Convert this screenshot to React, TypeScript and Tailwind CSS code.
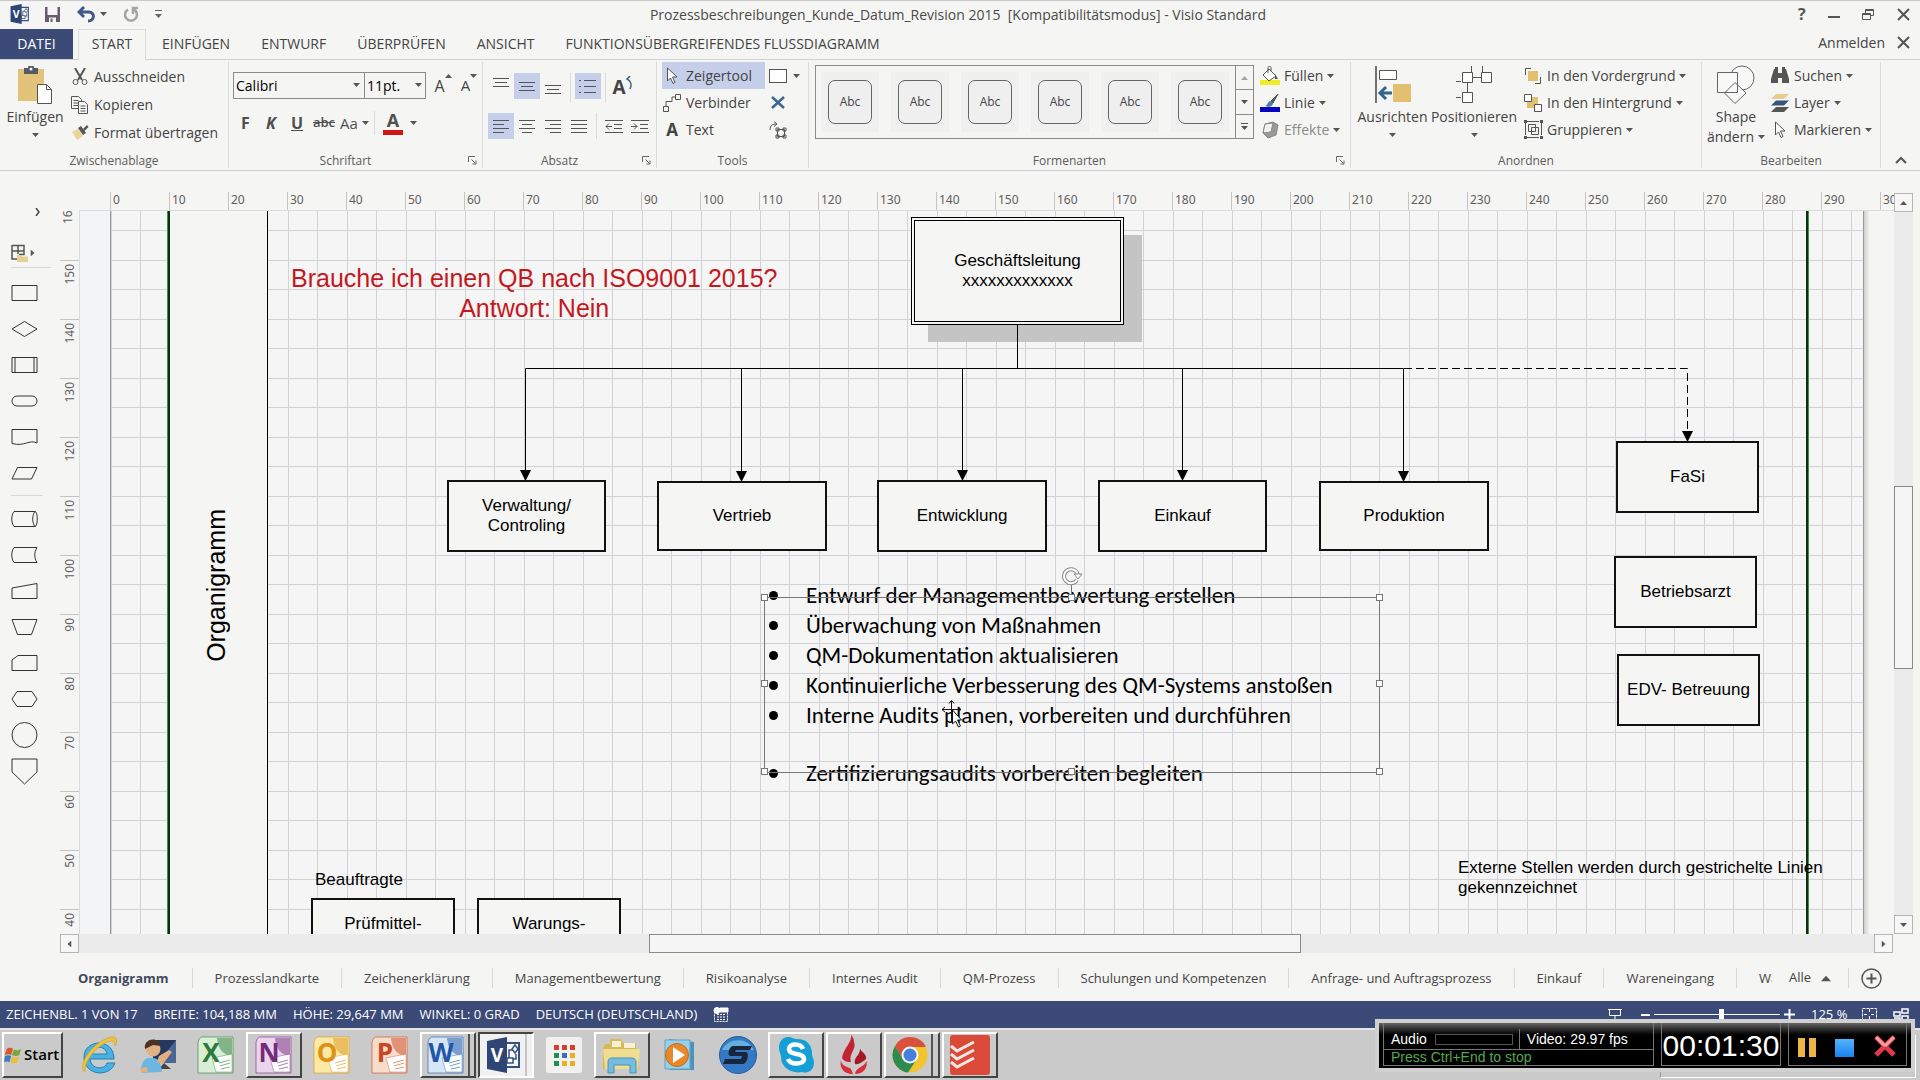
import clsx from 'clsx'
import { ReactNode } from 'react'

const menuTabs = ['EINFÜGEN', 'ENTWURF', 'ÜBERPRÜFEN', 'ANSICHT', 'FUNKTIONSÜBERGREIFENDES FLUSSDIAGRAMM']

const pageTabs = [
  'Prozesslandkarte',
  'Zeichenerklärung',
  'Managementbewertung',
  'Risikoanalyse',
  'Internes Audit',
  'QM-Prozess',
  'Schulungen und Kompetenzen',
  'Anfrage- und Auftragsprozess',
  'Einkauf',
  'Wareneingang'
]

const horizontalMarks = Array.from({ length: 31 }, (_, i) => i * 10)
const verticalMarks = Array.from({ length: 12 }, (_, i) => 150 - i * 10)

// Coordinates on the drawing sheet
const nodes = [
  { text: ['Verwaltung/', 'Controling'], x: 367, y: 270, w: 159, h: 72 },
  { text: ['Vertrieb'], x: 577, y: 271, w: 170, h: 70 },
  { text: ['Entwicklung'], x: 797, y: 270, w: 170, h: 72 },
  { text: ['Einkauf'], x: 1018, y: 270, w: 169, h: 72 },
  { text: ['Produktion'], x: 1239, y: 271, w: 170, h: 70 },
  { text: ['FaSi'], x: 1536, y: 231, w: 143, h: 72 },
  { text: ['Betriebsarzt'], x: 1534, y: 346, w: 143, h: 72 },
  { text: ['EDV- Betreuung'], x: 1537, y: 444, w: 143, h: 72 },
  { text: ['Prüfmittel-', 'beauftragter'], x: 231, y: 688, w: 144, h: 72 },
  { text: ['Warungs-', 'beauftragter'], x: 397, y: 688, w: 144, h: 72 }
]

const arrows = [
  { x: 445, y: 270 },
  { x: 661, y: 271 },
  { x: 882, y: 270 },
  { x: 1102, y: 270 },
  { x: 1323, y: 271 },
  { x: 1607, y: 231 }
]

const handles = [
  [684, 387],
  [991, 387],
  [1299, 387],
  [684, 473],
  [1299, 473],
  [684, 561],
  [991, 561],
  [1299, 561]
]

const bullets = [
  'Entwurf der Managementbewertung erstellen',
  'Überwachung von Maßnahmen',
  'QM-Dokumentation aktualisieren',
  'Kontinuierliche Verbesserung des QM-Systems anstoßen',
  'Interne Audits planen, vorbereiten und durchführen'
]

const Caret = ({ className }: { className?: string }) => (
  <svg viewBox="0 0 7 4" className={clsx('h-1 w-[7px] shrink-0 fill-[#555]', className)}>
    <path d="M0 0h7L3.5 4z" />
  </svg>
)

const Launcher = () => (
  <svg viewBox="0 0 9 9" className="h-[9px] w-[9px]" fill="none" stroke="#666">
    <path d="M.5 6V.5H7M3.500 3.500l4 4M8 4.500V8H4.500" />
  </svg>
)

interface GroupProps {
  label: string
  className: string
  launcher?: boolean
  children: ReactNode
}

const Group = ({ label, className, launcher, children }: GroupProps) => (
  <section className={clsx('flex shrink-0 flex-col border-r border-[#d9dade]', className)}>
    <div className="flex h-[91px]">{children}</div>
    <div className="flex h-[15px] items-center text-[12px] text-[#5c5c5c]">
      <span className="flex-1 text-center">{label}</span>
      {launcher && (
        <button aria-label={`${label} Optionen`} className="flex w-5 justify-center">
          <Launcher />
        </button>
      )}
    </div>
  </section>
)

interface ToolProps {
  icon: ReactNode
  label: string
  caret?: boolean
  className?: string
}

const Tool = ({ icon, label, caret, className }: ToolProps) => (
  <button className={clsx('flex h-[27px] items-center gap-1 whitespace-nowrap', className)}>
    <span className="flex w-5 justify-center">{icon}</span>
    {label}
    {caret && <Caret />}
  </button>
)

const Big = ({ icon, label, className }: { icon: ReactNode; label: string; className: string }) => (
  <button className={clsx('flex flex-col items-center pt-1', className)}>
    {icon}
    <span className="mt-[3px] leading-5">{label}</span>
    <Caret className="mt-[6px]" />
  </button>
)

const Cell = ({ active, label, children }: { active?: boolean; label: string; children: ReactNode }) => (
  <button
    aria-label={label}
    className={clsx('flex h-[26px] w-[26px] items-center justify-center', active && 'bg-[#c5cfe9]')}>
    {children}
  </button>
)

const Lines = ({ d }: { d: string }) => (
  <svg viewBox="0 0 18 16" className="h-4 w-[18px]" fill="none" stroke="#555">
    <path d={d} />
  </svg>
)

const VisioLogo = ({ className }: { className: string }) => (
  <svg viewBox="0 0 36 36" className={clsx('shrink-0', className)}>
    <path d="M18 6h15v24H18" fill="#f6f8fc" stroke="#35507f" strokeWidth="2" />
    <path d="M23 22v-9h4M27 22h3v-5" fill="none" stroke="#35507f" strokeWidth="1.500" />
    <path d="m29 8 3 4-3 4-3-4z" fill="#fff" stroke="#35507f" strokeWidth="1.500" />
    <rect x="21" y="21" width="6" height="5" fill="#fff" stroke="#35507f" strokeWidth="1.500" />
    <path d="M1 4 21 0v36L1 32z" fill="#2f4575" />
    <text x="11" y="25" textAnchor="middle" fontSize="19" fontWeight="bold" fill="#fff" fontFamily="Open Sans, sans-serif">
      V
    </text>
  </svg>
)

const TitleBar = () => (
  <header className="flex h-[29px] shrink-0 items-center border-t border-[#c9c9c9] pb-[2px] text-[14px]">
    <div className="flex w-[170px] items-center pl-[10px]">
      <VisioLogo className="h-5 w-5" />
      <button aria-label="Speichern" className="ml-[14px]">
        <svg viewBox="0 0 17 17" className="h-[17px] w-[17px]">
          <path d="M1 1h15v15H1z" fill="#6e5a6e" />
          <path d="M3.500 1h10v8h-10z" fill="#f5f5f3" />
          <path d="M5 11.500h7V16H5z" fill="#f5f5f3" />
          <path d="M6.500 12.500h2V16h-2z" fill="#6e5a6e" />
        </svg>
      </button>
      <button aria-label="Rückgängig" className="ml-4 flex items-center gap-1">
        <svg viewBox="0 0 19 17" className="h-[17px] w-[19px]" fill="none" stroke="#40598a" strokeWidth="3">
          <path d="M7 1 2 6l5 5M2.500 6H12c6 0 6 9-1 9" />
        </svg>
        <Caret />
      </button>
      <button aria-label="Wiederholen" className="ml-4">
        <svg viewBox="0 0 16 17" className="h-[17px] w-4" fill="none" stroke="#a5a5a5" strokeWidth="2.500">
          <path d="M5 3.500a6 6 0 1 0 6 0M10 8V2h5" />
        </svg>
      </button>
      <svg viewBox="0 0 7 8" className="ml-4 h-2 w-[7px] shrink-0" fill="#666">
        <path d="M0 0h7v1H0zM0 4h7L3.500 8z" />
      </svg>
    </div>
    <h1 className="flex-1 text-center whitespace-pre text-[#4a4a4a]">
      Prozessbeschreibungen_Kunde_Datum_Revision 2015  [Kompatibilitätsmodus] - Visio Standard
    </h1>
    <div className="ml-[52px] flex w-[122px] items-center justify-between pr-[10px] text-[#555]">
      <button aria-label="Hilfe" className="text-[16px] font-bold">?</button>
      <button aria-label="Minimieren">
        <svg viewBox="0 0 12 12" className="h-3 w-3" stroke="#555" strokeWidth="2">
          <path d="M0 9h12" />
        </svg>
      </button>
      <button aria-label="Verkleinern">
        <svg viewBox="0 0 13 13" className="h-[13px] w-[13px]" fill="none" stroke="#555">
          <path d="M.5 5.500h8v6h-8zM.5 6.500h8M3.500 5V1.500h8v6H9M3.500 2.500h8" />
        </svg>
      </button>
      <button aria-label="Schließen">
        <svg viewBox="0 0 13 13" className="h-[13px] w-[13px]" stroke="#555" strokeWidth="2">
          <path d="m1 1 11 11M12 1 1 12" />
        </svg>
      </button>
    </div>
  </header>
)

const MenuTabs = () => (
  <nav className="flex h-[31px] shrink-0 border-b border-[#d2d2d6] text-[14px]">
    <button className="h-[30px] w-[73px] bg-[#3b4a77] pb-[2px] text-white">DATEI</button>
    <button className="ml-[5px] h-[31px] w-[68px] border border-b-0 border-[#dcdcdf] bg-[#f5f5f3] pb-1">START</button>
    <div className="ml-[16px] flex gap-[31px] pb-[2px]">
      {menuTabs.map((tab) => (
        <button key={tab} className="whitespace-nowrap">
          {tab}
        </button>
      ))}
    </div>
    <div className="ml-auto flex items-center gap-3 pr-[10px] pb-1">
      <a href="#anmelden">Anmelden</a>
      <button aria-label="Dokument schließen">
        <svg viewBox="0 0 13 13" className="h-[13px] w-[13px]" stroke="#555" strokeWidth="2">
          <path d="m1 1 11 11M12 1 1 12" />
        </svg>
      </button>
    </div>
  </nav>
)

const Clipboard = () => (
  <Group label="Zwischenablage" className="w-[229px]">
    <Big
      className="w-[70px]"
      label="Einfügen"
      icon={
        <svg viewBox="0 0 36 38" className="h-[38px] w-9">
          <path d="M1 3h26v32H1z" fill="#e3c27a" />
          <path d="M7 2h4a3 3 0 0 1 6 0h4v6H7z" fill="#555a66" />
          <circle cx="14" cy="3" r="1.500" fill="#f5f5f3" />
          <path d="M20.500 18.500h9l5 5v14h-14z" fill="#fff" stroke="#555" />
          <path d="M29.500 18.500v5h5" fill="none" stroke="#555" />
        </svg>
      }
    />
    <div className="flex flex-col gap-px pt-px">
      <Tool
        label="Ausschneiden"
        icon={
          <svg viewBox="0 0 16 18" className="h-[18px] w-4" fill="none" stroke="#555">
            <path d="m3 0 7 12M13 0 6 12" strokeWidth="2" />
            <circle cx="3.500" cy="14" r="2.500" />
            <circle cx="12.500" cy="14" r="2.500" />
          </svg>
        }
      />
      <Tool
        label="Kopieren"
        icon={
          <svg viewBox="0 0 18 18" className="h-[18px] w-[18px]" fill="#f5f5f3" stroke="#555">
            <path d="M.5.5h7l3 3v9H.5zM2.500 4.500h5M2.500 7h5M2.500 9.500h5" />
            <path d="M7.500 5.500h6l3 3v9h-9zM9.500 10h5M9.500 12.500h5M9.500 15h5" />
          </svg>
        }
      />
      <Tool
        label="Format übertragen"
        icon={
          <svg viewBox="0 0 18 16" className="h-4 w-[18px]">
            <path d="m1 7 6-3 5 7-6 4z" fill="#ead49a" />
            <path d="m7 3 3-2 5 7-3 2z" fill="#555" />
            <path d="m12 4 4-4 1.500 2-4 4z" fill="#555" />
          </svg>
        }
      />
    </div>
  </Group>
)

const FontGroup = () => (
  <Group label="Schriftart" launcher className="w-[254px]">
    <div className="flex flex-col gap-[11px] pt-[10px] pl-1">
      <div className="flex items-center">
        <label className="relative flex">
          <span className="sr-only">Schriftart</span>
          <select className="h-[27px] w-[132px] appearance-none border border-[#8b8b8b] pl-[2px] text-[14px] text-black">
            <option>Calibri</option>
          </select>
          <Caret className="pointer-events-none absolute top-[11px] right-[5px]" />
        </label>
        <label className="relative flex">
          <span className="sr-only">Schriftgrad</span>
          <select className="-ml-px h-[27px] w-[62px] appearance-none border border-[#8b8b8b] pl-[2px] text-[14px] text-black">
            <option>11pt.</option>
          </select>
          <Caret className="pointer-events-none absolute top-[11px] right-1" />
        </label>
        <button aria-label="Schriftgrad vergrößern" className="ml-1 flex w-[26px] justify-center text-[16px]">
          A<Caret className="rotate-180" />
        </button>
        <button aria-label="Schriftgrad verkleinern" className="flex w-[26px] justify-center text-[15px]">
          A<Caret />
        </button>
      </div>
      <div className="flex h-[26px] items-center text-[16px] text-[#505050]">
        <button className="w-[25px] font-bold">F</button>
        <button className="w-[26px] font-bold italic">K</button>
        <button className="w-[26px] font-bold underline">U</button>
        <button className="w-7 text-[13px] font-semibold line-through">abc</button>
        <button className="ml-[2px] flex w-8 items-center gap-1 text-[15px]">
          Aa
          <Caret />
        </button>
        <span className="ml-[2px] h-6 w-px bg-[#d9dade]" />
        <button aria-label="Schriftfarbe" className="ml-2 flex items-center gap-[7px]">
          <span className="flex h-6 w-5 items-start justify-center border-b-[5px] border-[#d01515] text-[18px] leading-[18px] font-bold">
            A
          </span>
          <Caret />
        </button>
      </div>
    </div>
  </Group>
)

const Paragraph = () => (
  <Group label="Absatz" launcher className="w-[174px]">
    <div className="flex flex-col gap-[11px] pt-[11px] pl-[5px]">
      <div className="flex">
        <Cell label="Oben">
          <Lines d="M1 .500h16M3 4.500h12M1 8.500h16" />
        </Cell>
        <Cell label="Mitte" active>
          <Lines d="M1 4.500h16M3 8.500h12M1 12.500h16" />
        </Cell>
        <Cell label="Unten">
          <Lines d="M1 7.500h16M3 11.500h12M1 15.500h16" />
        </Cell>
        <span className="mx-[4px] w-px bg-[#d9dade]" />
        <Cell label="Aufzählung" active>
          <Lines d="M5 2.500h12M5 8.500h12M5 14.500h12M0 2.500h2M0 8.500h2M0 14.500h2" />
        </Cell>
        <span className="mx-[4px] w-px bg-[#d9dade]" />
        <button aria-label="Textrichtung" className="flex w-6 items-center justify-center text-[19px] font-bold">
          A
          <svg viewBox="0 0 6 14" className="-mt-2 h-[14px] w-[6px]" fill="none" stroke="#35627e" strokeWidth="1.500">
            <path d="M4 13c2-4 1-8-3-10M4 0 1 3l3 2" />
          </svg>
        </button>
      </div>
      <div className="flex">
        <Cell label="Linksbündig" active>
          <Lines d="M1 2.500h16M1 6.500h11M1 10.500h16M1 14.500h11" />
        </Cell>
        <Cell label="Zentriert">
          <Lines d="M1 2.500h16M4 6.500h10M1 10.500h16M4 14.500h10" />
        </Cell>
        <Cell label="Rechtsbündig">
          <Lines d="M1 2.500h16M6 6.500h11M1 10.500h16M6 14.500h11" />
        </Cell>
        <Cell label="Blocksatz">
          <Lines d="M1 2.500h16M1 6.500h16M1 10.500h16M1 14.500h16" />
        </Cell>
        <span className="mx-1 w-px bg-[#d9dade]" />
        <Cell label="Einzug verkleinern">
          <Lines d="M0 2.500h18M9 6.500h8M9 10.500h8M0 14.500h18M7 8.500H1M4 5.500l-3 3 3 3" />
        </Cell>
        <Cell label="Einzug vergrößern">
          <Lines d="M0 2.500h18M9 6.500h8M9 10.500h8M0 14.500h18M0 8.500h6M3 5.500l3 3-3 3" />
        </Cell>
      </div>
    </div>
  </Group>
)

const Tools = () => (
  <Group label="Tools" className="w-[152px]">
    <div className="flex flex-col pl-[5px]">
      <Tool
        className="w-[103px] bg-[#c5cfe9]"
        label="Zeigertool"
        icon={
          <svg viewBox="0 0 12 18" className="h-[18px] w-3" fill="#fff" stroke="#555">
            <path d="M1.500 1v13l3-3 2.500 5.500 2-1L6.500 10H11z" />
          </svg>
        }
      />
      <Tool
        label="Verbinder"
        icon={
          <svg viewBox="0 0 18 18" className="h-[18px] w-[18px]" fill="none" stroke="#555">
            <path d="M.5 12.500h5v5h-5zM12.500.5h5v5h-5zM3 12V7.500h6V3h3" />
          </svg>
        }
      />
      <Tool label="Text" icon={<span className="text-[17px] font-bold">A</span>} />
    </div>
    <div className="flex flex-col pl-1">
      <button aria-label="Rechteck" className="flex h-[27px] items-center gap-[6px]">
        <span className="h-[14px] w-[18px] border border-[#555] bg-white" />
        <Caret />
      </button>
      <button aria-label="Verbindungspunkt" className="flex h-[27px] items-center pl-[2px]">
        <svg viewBox="0 0 14 13" className="h-[13px] w-[14px]" stroke="#3d6791" strokeWidth="2.500">
          <path d="m1 1 12 11M13 1 1 12" />
        </svg>
      </button>
      <button aria-label="Textblock" className="flex h-[27px] items-center">
        <svg viewBox="0 0 18 18" className="h-[18px] w-[18px]" fill="none" stroke="#555">
          <path d="M8.500 8.500h7v7h-7zM7 7h3v3H7zM14 7h3v3h-3zM7 14h3v3H7zM14 14h3v3h-3zM1 9c0-5 3-6 6-6M5 .5 8 3 5 5.500" />
        </svg>
      </button>
    </div>
  </Group>
)

const Styles = () => (
  <Group label="Formenarten" launcher className="w-[542px]">
    <div className="mt-[3px] ml-[6px] flex h-[74px] w-[439px] border border-[#8b8b8b]">
      <div className="flex flex-1 items-center gap-3 pl-[5px]">
        {[1, 2, 3, 4, 5, 6].map((n) => (
          <button key={n} aria-label={`Formenart ${n}`} className="flex h-[60px] w-[58px] items-center justify-center bg-[#f0f0f0]">
            <span className="flex h-11 w-11 items-center justify-center rounded-[7px] border border-[#666] bg-[#efefef] text-[12px]">
              Abc
            </span>
          </button>
        ))}
      </div>
      <div className="flex w-[18px] flex-col divide-y divide-[#8b8b8b] border-l border-[#8b8b8b]">
        <button aria-label="Vorherige" className="flex flex-1 items-center justify-center">
          <Caret className="w-[5px] rotate-180 opacity-50" />
        </button>
        <button aria-label="Nächste" className="flex flex-1 items-center justify-center">
          <Caret className="w-[5px]" />
        </button>
        <button aria-label="Mehr" className="flex flex-1 flex-col items-center justify-center gap-[2px]">
          <span className="h-px w-[7px] bg-[#555]" />
          <Caret />
        </button>
      </div>
    </div>
    <div className="ml-[6px] flex flex-col">
      <Tool
        caret
        label="Füllen"
        icon={
          <svg viewBox="0 0 20 20" className="h-5 w-5">
            <path d="M0 14h20v5H0z" fill="#f0ee20" />
            <path d="m9 3 7 7-7 5-6-6zM8 7V1.500c0-1.500 3-1.500 3 0V5" fill="#fff" stroke="#555" />
            <path d="m15 8 3 5h-3z" fill="#555" />
          </svg>
        }
      />
      <Tool
        caret
        label="Linie"
        icon={
          <svg viewBox="0 0 20 20" className="h-5 w-5">
            <path d="M0 14h20v5H0z" fill="#0606c0" />
            <path d="m18 1-7 7 2 2z" fill="#555" stroke="#555" />
            <path d="M11 8c-4 0-3 5-6 5 4 2 8 0 8-3z" fill="#4d7da5" />
          </svg>
        }
      />
      <Tool
        caret
        className="text-[#8b8b8b]"
        label="Effekte"
        icon={
          <svg viewBox="0 0 18 18" className="h-[18px] w-[18px]" stroke="#888">
            <path d="m2 12 2-9 8-2 5 3-2 10-8 3z" fill="#999" />
            <path d="m4 3 8-1-2 9-8 1z" fill="#f2f2f2" />
          </svg>
        }
      />
    </div>
  </Group>
)

const Arrange = () => (
  <Group label="Anordnen" className="w-[351px]">
    <Big
      className="ml-[5px] w-[73px]"
      label="Ausrichten"
      icon={
        <svg viewBox="0 0 36 38" className="h-[38px] w-9">
          <path d="M1 0v37" stroke="#444" strokeWidth="1.500" />
          <path d="M4.500 4.500h17v9h-17z" fill="#fff" stroke="#555" />
          <path d="M18 18h18v18H18z" fill="#e3bf70" />
          <path d="M17 27H5M11 21l-6 6 6 6" fill="none" stroke="#2f678f" strokeWidth="3" />
        </svg>
      }
    />
    <Big
      className="w-[90px]"
      label="Positionieren"
      icon={
        <svg viewBox="0 0 36 38" className="h-[38px] w-9" fill="#fff" stroke="#555">
          <path d="M11.500 12v14M0 15.500h5m6-4h20M15.500 0v6M26.500 0v6M0 31.500h5" />
          <path d="M6.500 6.500h10v10h-10zM25.500 6.500h10v10h-10zM6.500 26.500h10v10h-10z" />
        </svg>
      }
    />
    <div className="ml-1 flex flex-col">
      <Tool
        caret
        label="In den Vordergrund"
        icon={
          <svg viewBox="0 0 18 18" className="h-[18px] w-[18px]" fill="none" stroke="#555">
            <path d="M4 4h10v10H4z" fill="#e3bf70" stroke="none" />
            <path d="M7 1.500H1.500V8M11 16.500h5.500V10" />
          </svg>
        }
      />
      <Tool
        caret
        label="In den Hintergrund"
        icon={
          <svg viewBox="0 0 20 20" className="h-5 w-5" fill="#fff" stroke="#555">
            <path d="M4 4h11v11H4z" fill="#e3bf70" stroke="none" />
            <path d="M1.500 1.500h7v7h-7zM11.500 11.500h7v7h-7z" />
          </svg>
        }
      />
      <Tool
        caret
        label="Gruppieren"
        icon={
          <svg viewBox="0 0 19 19" className="h-[19px] w-[19px]" fill="none" stroke="#555">
            <path d="M4.500 4.500h7v7h-7zM7.500 7.500h7v7h-7zM1.500 3v12M17.500 3v12M3 1.500h12M3 17.500h12" />
            <path d="M0 0h3v3H0zM16 0h3v3h-3zM0 16h3v3H0zM16 16h3v3h-3z" fill="#555" stroke="none" />
          </svg>
        }
      />
    </div>
  </Group>
)

const Edit = () => (
  <Group label="Bearbeiten" className="w-[179px]">
    <button className="flex w-[68px] flex-col items-center pt-[3px]">
      <svg viewBox="0 0 38 39" className="h-[39px] w-[38px]" fill="#f8f8f8" stroke="#666">
        <circle cx="25" cy="13" r="12" />
        <path d="M.5 7.500h20v20H.5zM18 17.500l11 10.500-11 10.500L7.500 28z" />
      </svg>
      <span className="mt-[3px] leading-5">Shape</span>
      <span className="flex items-center gap-1 leading-5">
        ändern
        <Caret />
      </span>
    </button>
    <div className="flex flex-col">
      <Tool
        caret
        label="Suchen"
        icon={
          <svg viewBox="0 0 18 17" className="h-[17px] w-[18px]" fill="#555">
            <path d="M3 2h4v4h4V2h4l3 10v4h-7v-5H7v5H0v-4zM4 0h3v2H4zM11 0h3v2h-3z" />
          </svg>
        }
      />
      <Tool
        caret
        label="Layer"
        icon={
          <svg viewBox="0 0 18 18" className="h-[18px] w-[18px]">
            <path d="M5 0h13l-5 5H0z" fill="#e8cb8d" />
            <path d="M5 6.500h13l-5 5H0z" fill="#36557c" />
            <path d="M5 13h13l-5 5H0z" fill="#555" />
          </svg>
        }
      />
      <Tool
        caret
        label="Markieren"
        icon={
          <svg viewBox="0 0 12 18" className="h-[18px] w-3" fill="#fff" stroke="#555">
            <path d="M1.500 1v13l3-3 2.500 5.500 2-1L6.500 10H11z" />
          </svg>
        }
      />
    </div>
  </Group>
)

const shapeTop = [
  ['Prozess', 'M1 4.500h25v15H1z'],
  ['Entscheidung', 'M1 12 13.500 4.500 26 12l-12.500 7.500z'],
  ['Unterprozess', 'M1 4.500h25v15H1zM4 4.500v15M23 4.500v15'],
  ['Start/Ende', 'M6 7h15a5 5 0 0 1 0 10H6A5 5 0 0 1 6 7z'],
  ['Dokument', 'M1 4.500h25V18c-8-4-12 4-25 .5z'],
  ['Daten', 'M6.500 6.500H26l-5.500 11.500H1z']
]

const shapeBottom = [
  ['Datenbank', 'M3 4.500h21c3 0 3 15 0 15H3c-3-4-3-11 0-15zM24 4.500c-3 3-3 12 0 15'],
  ['Externe Daten', 'M3 4.500h23c-3 5-3 10 0 15H3c-3-4-3-11 0-15z'],
  ['Manuelle Eingabe', 'M1 9 26 4.500v15H1z'],
  ['Manueller Vorgang', 'M1 4.500h25l-5.500 15h-14z'],
  ['Karte', 'M7 4.500h19v15H1V9z'],
  ['Vorbereitung', 'M6 4.500h15l5 7.500-5 7.500H6L1 12z'],
  ['Referenz', 'M13.500-.5a12.500 12.500 0 1 1 0 25 12.500 12.500 0 0 1 0-25z'],
  ['Seitenreferenz', 'M1 0h25v13l-12.500 12L1 13z']
]

const ShapeButton = ({ name, d }: { name: string; d: string }) => (
  <button aria-label={name} className="flex h-9 items-center">
    <svg viewBox="0 0 27 24" className="h-6 w-[27px] overflow-visible" fill="none" stroke="#333">
      <path d={d} />
    </svg>
  </button>
)

const Stencils = () => (
  <aside className="flex w-[60px] shrink-0 flex-col pl-[11px]">
    <button aria-label="Shapes einblenden" className="mt-8 ml-6 flex h-[18px] items-center">
      <svg viewBox="0 0 5 8" className="h-2 w-[5px]" fill="none" stroke="#444" strokeWidth="1.500">
        <path d="m1 0 3 4-3 4" />
      </svg>
    </button>
    <button aria-label="Weitere Shapes" className="mt-[22px] flex h-[20px] items-center">
      <svg viewBox="0 0 18 19" className="h-[19px] w-[18px]" fill="none">
        <path d="M1 1.500h12v9H8M1 1v14h5M1 7h12M7 1v9" stroke="#555" strokeWidth="1.500" />
        <path d="M6 18V11h4l1 1.500h6V18z" fill="#e6cf94" />
      </svg>
      <Caret className="-rotate-90" />
    </button>
    <div className="mt-1 h-px w-10 bg-[#d9d9dc]" />
    <div className="mt-[7px] flex flex-col">
      {shapeTop.map(([name, d]) => (
        <ShapeButton key={name} name={name} d={d} />
      ))}
    </div>
    <div className="mt-1 mb-[5px] h-px w-8 shrink-0 bg-[#d9d9dc]" />
    <div className="flex flex-col">
      {shapeBottom.map(([name, d]) => (
        <ShapeButton key={name} name={name} d={d} />
      ))}
    </div>
  </aside>
)

const Sheet = () => (
  <div className="relative flex-1 overflow-hidden border-t border-l border-[#dcdcdc] bg-[#f5f5f3] font-['Liberation_Sans',sans-serif] text-black">
    <svg className="absolute inset-0 h-full w-full">
      <defs>
        <pattern id="grid" x="31" y="-10" width="59" height="59" patternUnits="userSpaceOnUse">
          <path d="M.5 0v59M29.500 0v59M0 .5h59M0 29.500h59" stroke="#d0d2d3" fill="none" />
        </pattern>
        <linearGradient id="shade">
          <stop offset="0" stopColor="#cfcfcf" />
          <stop offset="1" stopColor="#f0f0ee" />
        </linearGradient>
      </defs>
      <rect x="0" width="30" height="100%" fill="#f3f4f5" />
      <rect x="31" width="1752" height="100%" fill="#f5f5f5" />
      <rect x="31" width="1752" height="100%" fill="url(#grid)" />
      <path d="M30.500 0v2000M1783.500 0v2000" stroke="#9a9a9a" />
      <rect x="1784" width="5" height="100%" fill="url(#shade)" />
      <rect x="90" width="97" height="100%" fill="#f5f5f3" />
      <path d="M87.500 0v2000M1728.500 0v2000" stroke="#3f8f4a" />
      <path d="M89 0v2000M1727 0v2000" stroke="#0c2f10" strokeWidth="2" />
      <path d="M187.500 0v2000" stroke="#000" />
      <rect x="848" y="24" width="214" height="107" fill="#c4c4c4" />
      <path d="M937.500 113v44M445.500 270V157.500h878V270M661.500 157v113M882.500 157v113M1102.500 157v113" fill="none" stroke="#000" />
      <path d="M1324 157.500h283.500V222" fill="none" stroke="#000" strokeDasharray="8 4" />
      {arrows.map(({ x, y }) => (
        <path key={x} d={`M${x - 5} ${y - 11}h11l-5.500 11z`} />
      ))}
    </svg>
    <div className="absolute top-[6px] left-[831px] h-[108px] w-[213px] border border-black bg-[#f5f5f3] p-[2px]">
      <div className="flex h-full flex-col items-center justify-center border border-black text-[17px] leading-5">
        <span>Geschäftsleitung</span>
        <span>xxxxxxxxxxxxx</span>
      </div>
    </div>
    {nodes.map(({ text, x, y, w, h }) => (
      <div
        key={text[0]}
        style={{ left: x, top: y - 1, width: w, height: h }}
        className="absolute flex flex-col items-center justify-center border-2 border-[#111] bg-[#f5f5f3] text-[17px] leading-5">
        {text.map((line) => (
          <span key={line} className="whitespace-nowrap">
            {line}
          </span>
        ))}
      </div>
    ))}
    <p className="absolute top-[52px] left-[211px] text-center text-[25px] leading-[30px] whitespace-nowrap text-[#c5181d]">
      Brauche ich einen QB nach ISO9001 2015?
      <br />
      Antwort: Nein
    </p>
    <p className="absolute top-[298px] left-[121px] rotate-180 text-[25px] leading-[30px] [writing-mode:vertical-rl]">
      Organigramm
    </p>
    <p className="absolute top-[659px] left-[235px] text-[17px] leading-5">Beauftragte</p>
    <p className="absolute top-[647px] left-[1378px] text-[17px] leading-5 whitespace-nowrap">
      Externe Stellen werden durch gestrichelte Linien
      <br />
      gekennzeichnet
    </p>
    <ul className="absolute top-[369px] left-[689px] font-['Carlito','Lato',sans-serif] text-[23px] leading-[30px] whitespace-nowrap">
      {bullets.map((item) => (
        <li key={item} className="flex items-center">
          <span className="mr-7 h-[9px] w-[9px] rounded-full bg-black" />
          {item}
        </li>
      ))}
      <li className="mt-7 flex items-center">
        <span className="mr-7 h-[9px] w-[9px] rounded-full bg-black" />
        Zertifizierungsaudits vorbereiten begleiten
      </li>
    </ul>
    <svg className="pointer-events-none absolute inset-0 h-full w-full" fill="none">
      <path d="M684.500 386.500h615v175h-615zM991.500 372v12" stroke="#777" />
      {handles.map(([x, y]) => (
        <rect key={`${x}-${y}`} x={x - 2.5} y={y - 3.5} width="6" height="6" fill="#fff" stroke="#777" />
      ))}
      <path d="M997 369a7 7 0 1 1 1-5" stroke="#888" strokeWidth="4" />
      <path d="M997 369a7 7 0 1 1 1-5" stroke="#fff" strokeWidth="2" />
      <path d="m994 363 8 0-4 5z" fill="#fff" stroke="#888" />
      <path d="M871.500 490v20M862 498.500h19M869 492.500l2.500-3 2.500 3M865 496l-3 2.500 3 2.500M878 496l3 2.500-3 2.500" stroke="#111" />
      <path d="M872.500 499v14l3-3 3 6 2-1-3-6h4z" fill="#fff" stroke="#111" />
    </svg>
  </div>
)

const ScrollArrow = ({ label, className }: { label: string; className: string }) => (
  <button
    aria-label={label}
    className="flex h-[19px] w-[19px] shrink-0 items-center justify-center border border-[#b5b5b5] bg-[#f7f7f7]">
    <Caret className={clsx('w-2', className)} />
  </button>
)

const Workspace = () => (
  <main className="flex min-h-0 flex-1">
    <Stencils />
    <div className="flex min-w-0 flex-1 flex-col pt-[17px]">
      <div className="flex min-h-0 flex-1">
        <div className="flex min-w-0 flex-1 flex-col">
          <div className="flex h-[22px] overflow-hidden pl-[50px] font-['Noto_Sans',sans-serif] text-[12px] text-[#606060]">
            {horizontalMarks.map((mark) => (
              <span key={mark} className="mt-1 w-[59px] shrink-0 border-l border-[#c4c4c8] pl-[2px] leading-[15px]">
                {mark}
              </span>
            ))}
          </div>
          <div className="flex min-h-0 flex-1">
            <div className="flex w-[19px] shrink-0 flex-col overflow-hidden font-['Noto_Sans',sans-serif] text-[12px] text-[#606060]">
              <span className="h-[50px] shrink-0 rotate-180 text-right leading-[15px] [writing-mode:vertical-rl]">16</span>
              {verticalMarks.map((mark) => (
                <span key={mark} className="h-[59px] shrink-0 border-t border-[#c4c4c8] pt-[3px]">
                  <span className="ml-[2px] block rotate-180 text-right leading-[15px] [writing-mode:vertical-rl]">{mark}</span>
                </span>
              ))}
            </div>
            <Sheet />
          </div>
        </div>
        <div className="mt-[5px] mr-[7px] flex w-[19px] flex-col bg-[#ebebeb]">
          <ScrollArrow label="Nach oben" className="rotate-180" />
          <div className="flex-[275]" />
          <div className="flex-[181] border border-[#8b8b8b] bg-[#f5f5f5]" />
          <div className="flex-[247]" />
          <ScrollArrow label="Nach unten" className="" />
        </div>
      </div>
      <div className="mr-[27px] flex h-[19px] bg-[#ebebeb]">
        <ScrollArrow label="Nach links" className="rotate-90" />
        <div className="flex-[571]" />
        <div className="flex-[651] border border-[#8b8b8b] bg-[#f5f5f5]" />
        <div className="flex-[574]" />
        <ScrollArrow label="Nach rechts" className="-rotate-90" />
      </div>
    </div>
  </main>
)

const PageTabs = () => (
  <nav className="flex h-12 shrink-0 items-center pt-[2px] text-[13px]">
    <div className="flex min-w-0 flex-1 items-center divide-x divide-[#d9d9dc] overflow-hidden pl-[55px]">
      <button className="h-5 px-[23px] leading-5 font-bold text-[#3e4a5c]">Organigramm</button>
      {pageTabs.map((tab) => (
        <button key={tab} className="h-5 px-[22px] leading-5 whitespace-nowrap">
          {tab}
        </button>
      ))}
      <button className="h-5 pl-[22px] leading-5">Warenausgang</button>
    </div>
    <button className="ml-[17px] flex w-[60px] items-center gap-[10px] border-r border-[#d9d9dc]">
      Alle
      <Caret className="h-[7px] w-[10px] rotate-180" />
    </button>
    <button aria-label="Zeichenblatt einfügen" className="mr-[38px] ml-3">
      <svg viewBox="0 0 21 21" className="h-[21px] w-[21px]" fill="none" stroke="#555" strokeWidth="1.500">
        <circle cx="10.500" cy="10.500" r="9.500" />
        <path d="M10.500 5.500v10M5.500 10.500h10" strokeWidth="2" />
      </svg>
    </button>
  </nav>
)

const StatusBar = () => (
  <footer className="flex h-[27px] shrink-0 items-center bg-[#3b4a76] text-[13px] text-white">
    <div className="flex flex-1 items-center gap-4 pl-[6px] whitespace-nowrap">
      <span>ZEICHENBL. 1 VON 17</span>
      <span>BREITE: 104,188 MM</span>
      <span>HÖHE: 29,647 MM</span>
      <span>WINKEL: 0 GRAD</span>
      <span>DEUTSCH (DEUTSCHLAND)</span>
      <button aria-label="Makro aufzeichnen">
        <svg viewBox="0 0 16 15" className="h-[15px] w-4" fill="none" stroke="#fff">
          <path d="M1.500 3.500h13v11h-13zM4 7.500h9M4 10h9M4 12.500h9" strokeDasharray="2 1" />
          <path d="M7 1h8v4H7z" fill="#fff" />
          <circle cx="4" cy="3.500" r="3" fill="#fff" />
        </svg>
      </button>
    </div>
    <div className="flex items-center pr-[11px]">
      <button aria-label="Präsentationsmodus">
        <svg viewBox="0 0 14 13" className="h-[13px] w-[14px]" fill="none" stroke="#fff">
          <path d="M0 1.500h14M1.500 2v5.500h11V2M7 8v4M4 12.500h6" />
        </svg>
      </button>
      <button aria-label="Verkleinern" className="ml-[19px] h-[2px] w-[9px] bg-white" />
      <input
        type="range"
        aria-label="Zoom"
        defaultValue={54}
        className="mx-1 h-4 w-[126px] appearance-none bg-[linear-gradient(#fff,#fff)] bg-[length:100%_1px] bg-center bg-no-repeat [&::-webkit-slider-thumb]:h-3 [&::-webkit-slider-thumb]:w-[5px] [&::-webkit-slider-thumb]:appearance-none [&::-webkit-slider-thumb]:bg-white"
      />
      <button aria-label="Vergrößern">
        <svg viewBox="0 0 11 11" className="h-[11px] w-[11px]" stroke="#fff" strokeWidth="2">
          <path d="M0 5.500h11M5.500 0v11" />
        </svg>
      </button>
      <span className="ml-4 w-[51px]">125 %</span>
      <button aria-label="Seite anpassen">
        <svg viewBox="0 0 15 13" className="h-[13px] w-[15px]" fill="none" stroke="#fff">
          <path d="M.5.500h14v12H.5zM2 6.500h4M9 6.500h4M7.500 1v4M7.500 8v4" strokeDasharray="3 1" />
        </svg>
      </button>
      <button aria-label="Fenster wechseln" className="ml-4">
        <svg viewBox="0 0 16 14" className="h-[14px] w-4" fill="none" stroke="#fff" strokeWidth="1.500">
          <path d="M1 4h6v4H1zM9 1h6v4H9zM9 8h6v4H9zM1 10h6v3" />
        </svg>
      </button>
    </div>
  </footer>
)

interface OfficeProps {
  letter: string
  dark: string
  light: string
}

const Office = ({ letter, dark, light }: OfficeProps) => (
  <svg viewBox="0 0 38 38" className="h-[38px] w-[38px] shrink-0">
    <path d="M5 1h31v36H1V8c0-4 2-7 4-7z" fill={light} stroke={dark} strokeOpacity=".6" />
    <path d="M20 2h15v18c-8-1-14-6-15-18z" fill={dark} fillOpacity=".5" />
    <path d="m15 22 20-4v18H19z" fill="#fff" stroke={dark} strokeOpacity=".4" />
    <path d="m22 27 11-3M23 30l10-3M24 33l9-2" stroke={dark} strokeOpacity=".6" />
    <text x="14" y="26" textAnchor="middle" fontSize="26" fontWeight="bold" fill={dark} fontFamily="Open Sans, sans-serif">
      {letter}
    </text>
  </svg>
)

const apps: { name: string; open?: boolean; active?: boolean; stacked?: boolean; icon: ReactNode }[] = [
  {
    name: 'Internet Explorer',
    icon: (
      <svg viewBox="0 0 40 40" className="h-10 w-10" fill="none">
        <path d="M34 24H10c1 11 15 11 17 4h8c-5 15-31 13-31-6C4 4 34 2 34 24zM11 19h16c-1-9-15-9-16 0z" fill="#48b2e2" stroke="#2182b5" />
        <path d="M5 37C-3 32 10 8 31 2c6-1 7 4 4 9 0-6-4-6-10-3C12 15 4 29 5 37z" fill="#edc440" stroke="#cf9b20" strokeWidth=".6" />
      </svg>
    )
  },
  {
    name: 'Fernwartung',
    icon: (
      <svg viewBox="0 0 38 38" className="h-[38px] w-[38px]">
        <path d="M14 4h23v23H14z" fill="#24385f" />
        <path d="m37 4-18 23h18z" fill="#4b6692" />
        <path d="m25 27 7 6H20z" fill="#444" />
        <path d="M2 37c0-12 4-16 11-15 8 0 9 6 10 14z" fill="#6db6e0" />
        <path d="m20 20 10-6 3 2-9 12-6-2z" fill="#e0b080" />
        <circle cx="14" cy="13" r="7.500" fill="#dfb286" />
        <path d="M6 13C4 2 20 0 22 10l-8-1z" fill="#4b3421" />
        <path d="m1 32 7-1 1 5-7 1z" fill="#e0b080" />
      </svg>
    )
  },
  { name: 'Excel', icon: <Office letter="X" dark="#2b7a3b" light="#d9efd5" /> },
  { name: 'OneNote', open: true, icon: <Office letter="N" dark="#752a7c" light="#ead5ec" /> },
  { name: 'Outlook', icon: <Office letter="O" dark="#dd9216" light="#fbe9a5" /> },
  { name: 'PowerPoint', icon: <Office letter="P" dark="#c9471f" light="#f8dccb" /> },
  { name: 'Word', open: true, stacked: true, icon: <Office letter="W" dark="#1d57a5" light="#d7e6f7" /> },
  { name: 'Visio', open: true, active: true, stacked: true, icon: <VisioLogo className="h-9 w-9" /> },
  {
    name: 'Google Apps',
    icon: (
      <svg viewBox="0 0 36 36" className="h-9 w-9">
        <rect width="36" height="36" rx="3" fill="#f2f1ef" />
        <path d="M8 8h5v5H8zM16 8h5v5h-5zM24 8h5v5h-5z" fill="#d5402f" />
        <path d="M8 16h5v5H8zM8 24h5v5H8z" fill="#1d9150" />
        <path d="M16 16h5v5h-5z" fill="#3470c9" />
        <path d="M24 16h5v5h-5zM24 24h5v5h-5zM16 24h5v5h-5z" fill="#edae23" />
      </svg>
    )
  },
  {
    name: 'Explorer',
    open: true,
    icon: (
      <svg viewBox="0 0 40 38" className="h-[38px] w-10">
        <path d="M3 8h5V3h11l2 4h13v6h3v20H1V12z" fill="#d7b95a" />
        <path d="M10 5h9v6h-9zM22 7h11v5H22z" fill="#f6f1d3" />
        <path d="M1 13h37l-2 20H3z" fill="#efdd91" />
        <path d="M6 37V26c0-3 2-4 4-4h20c3 0 4 2 4 4v11h-6v-8H12v8z" fill="#76bcdf" stroke="#4c91b8" />
      </svg>
    )
  },
  {
    name: 'Media Player',
    icon: (
      <svg viewBox="0 0 34 34" className="h-[34px] w-[34px]">
        <path d="m6 1 25 3v28H7z" fill="#4c93b9" />
        <path d="M2 2h25v29H2z" fill="#98d2ea" stroke="#5aa5c8" />
        <circle cx="14" cy="17" r="11.500" fill="#e8872b" stroke="#c7691b" />
        <path d="m10 9 12 8-12 8z" fill="#fff" />
      </svg>
    )
  },
  {
    name: 'Snagit',
    icon: (
      <svg viewBox="0 0 38 38" className="h-[38px] w-[38px]">
        <circle cx="19" cy="19" r="18.500" fill="#3579c4" stroke="#265a97" />
        <path d="M3 14a18 18 0 0 1 32 0z" fill="#62b0df" />
        <path d="M33 10H14c-4 0-6 9-3 10h12l-1 3H6l-2 5h20c4 0 7-11 3-12H16l1-2h14z" fill="#17263a" />
      </svg>
    )
  },
  {
    name: 'Skype',
    open: true,
    icon: (
      <svg viewBox="0 0 38 38" className="h-[38px] w-[38px]">
        <path d="M11 1c4 0 5 2 9 2 10 0 15 6 15 15 0 3 2 5 2 9 0 7-6 11-12 9-10 2-21-4-21-15 0-3-2-5-2-9C2 5 6 1 11 1z" fill="#159fd7" />
        <path d="M26 13c-2-6-14-6-14 0 0 7 15 3 15 10 0 6-14 6-16 0" fill="none" stroke="#fff" strokeWidth="4.500" />
      </svg>
    )
  },
  {
    name: 'Brennprogramm',
    open: true,
    icon: (
      <svg viewBox="0 0 28 40" className="h-10 w-7">
        <path d="M11 0c2 6-8 14-9 23 2 4 6 4 9 4-3-8 6-13 3-20 0-3-1-5-3-7z" fill="#c32332" />
        <path d="M20 14c0 7-7 8-5 15 4 1 7-2 11-5 1-4-3-6-6-10z" fill="#a91626" />
        <path d="M1 25c0 6 6 6 10 9l2 5C4 39-1 33 1 25zM27 26c0 8-4 13-12 13 1-7 8-6 12-13z" fill="#d92d3b" />
      </svg>
    )
  },
  {
    name: 'Chrome',
    open: true,
    stacked: true,
    icon: (
      <svg viewBox="0 0 36 36" className="h-9 w-9">
        <circle cx="18" cy="18" r="17.500" fill="#f2c52f" />
        <path d="M3 9a17.500 17.500 0 0 1 31 1H18l-7 12z" fill="#d9513c" />
        <path d="M3 9a17.500 17.500 0 0 0 13 26.500L25 22l-14 0z" fill="#2f8c50" />
        <circle cx="18" cy="18" r="8.500" fill="#f5f5f5" />
        <circle cx="18" cy="18" r="6.500" fill="#4580dc" />
      </svg>
    )
  },
  {
    name: 'Todoist',
    open: true,
    icon: (
      <svg viewBox="0 0 40 40" className="h-10 w-10">
        <rect width="40" height="40" rx="3" fill="#db4a38" />
        <path d="m1 11 6 5L24 7M1 19l6 5 17-9M1 27l6 5 17-9" fill="none" stroke="#fbe7e3" strokeWidth="3" />
      </svg>
    )
  }
]

const Recorder = () => (
  <section
    aria-label="Aufnahme"
    className="absolute right-[5px] bottom-2 flex h-[53px] w-[540px] gap-[7px] border-4 border-[#d0d0d0] bg-linear-to-b from-[#666] to-black to-33% px-1 pb-[2px] font-['Liberation_Sans',sans-serif] text-[14px] text-white">
    <div className="flex w-[271px] flex-col">
      <div className="flex flex-1 items-end border border-t-0 border-[#777]">
        <span className="pl-[7px] leading-5">Audio</span>
        <span className="mb-1 ml-2 h-[11px] w-[78px] border border-[#555] bg-black" />
        <span className="ml-[6px] border-l border-[#777] pl-[7px] leading-5">Video: 29.97 fps</span>
      </div>
      <p className="h-4 border border-t-0 border-[#777] pl-[7px] leading-[15px] text-[#55a84e]">Press Ctrl+End to stop</p>
    </div>
    <div className="flex w-[120px] items-end justify-center border border-t-0 border-[#777] pb-1 text-[30px] leading-[30px]">
      00:01:30
    </div>
    <div className="flex flex-1 items-end justify-between border border-t-0 border-[#777] px-[9px] pb-2">
      <button aria-label="Pause" className="flex gap-1">
        <span className="h-[19px] w-[7px] bg-[#eeb544]" />
        <span className="h-[19px] w-[7px] bg-[#eeb544]" />
      </button>
      <button aria-label="Stopp" className="h-[18px] w-[19px] bg-linear-to-b from-[#54b1ff] to-[#1583ec]" />
      <button aria-label="Abbrechen">
        <svg viewBox="0 0 24 22" className="h-[22px] w-6" stroke="#e0394a" strokeWidth="5">
          <path d="m3 2 18 18M21 2 3 20" />
          <path d="m3 2 9 9M21 2l-9 9" stroke="#f2a0a0" strokeWidth="3" />
        </svg>
      </button>
    </div>
  </section>
)

const Taskbar = () => (
  <div className="relative flex h-[52px] shrink-0 items-center border-t-2 border-[#e6e6e6] bg-[#cacaca] pb-px">
    <button className="ml-[2px] flex h-[46px] w-[61px] items-center gap-[2px] border-t-2 border-r-2 border-b-2 border-l-2 border-t-white border-r-[#444] border-b-[#444] border-l-white font-['Open_Sans',sans-serif] text-[15px] font-semibold text-black">
      <svg viewBox="0 0 20 20" className="h-5 w-[18px] shrink-0">
        <path d="M3 3c3-2 5-1 7 0L8 10c-2-1-4-1-7 0z" fill="#d9572c" />
        <path d="M11 4c3 1 5 1 8-1l-2 7c-3 2-5 1-8 0z" fill="#76a83e" />
        <path d="M1 11c3-1 5-1 7 0l-2 7c-2-1-4-1-6 0z" fill="#3d7dc0" />
        <path d="M9 12c3 1 5 1 8 0l-2 6c-3 2-5 1-8 0z" fill="#ecbd38" />
      </svg>
      Start
    </button>
    <div className="ml-2 flex">
      {apps.map(({ name, open, active, stacked, icon }) => (
        <button
          key={name}
          aria-label={name}
          className={clsx(
            'mx-px flex h-[46px] w-14 items-center justify-center border-2',
            !open && 'border-transparent',
            open && !active && 'border-t-white border-r-[#444] border-b-[#444] border-l-white',
            active && 'border-t-[#444] border-r-white border-b-white border-l-[#444] bg-[#f1f1f1]'
          )}>
          {icon}
          {stacked && <span className={clsx('ml-[3px] h-full w-[2px]', active ? 'bg-[#c6c6c6]' : 'bg-[#555]')} />}
        </button>
      ))}
    </div>
    <div className="absolute right-1 bottom-[2px] h-11 w-64 border border-[#999] border-r-white border-b-white" />
    <Recorder />
  </div>
)

const App = () => (
  <div className="flex h-screen min-h-[900px] flex-col overflow-hidden bg-[#f5f5f3] font-['Open_Sans','Noto_Sans',sans-serif] text-[#444]">
    <TitleBar />
    <MenuTabs />
    <div className="flex h-[111px] shrink-0 border-b border-[#cfcfd2] pt-[2px] pb-[2px] text-[14px]">
      <Clipboard />
      <FontGroup />
      <Paragraph />
      <Tools />
      <Styles />
      <Arrange />
      <Edit />
      <div className="flex flex-1 items-end justify-center pb-1">
        <button aria-label="Menüband reduzieren">
          <svg viewBox="0 0 12 8" className="h-2 w-3" fill="none" stroke="#555" strokeWidth="2">
            <path d="m1 7 5-5 5 5" />
          </svg>
        </button>
      </div>
    </div>
    <Workspace />
    <PageTabs />
    <StatusBar />
    <Taskbar />
  </div>
)

export default App
